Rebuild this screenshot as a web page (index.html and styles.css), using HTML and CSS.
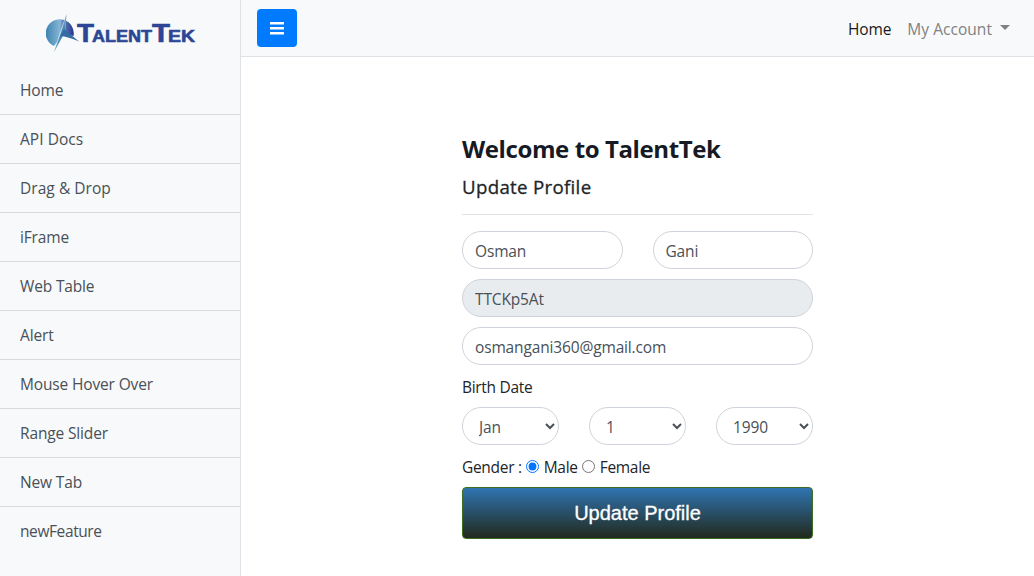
FILE: index.html
```html
<!DOCTYPE html>
<html lang="en">
<head>
<meta charset="utf-8">
<title>TalentTek</title>
<link rel="stylesheet" href="styles.css">
</head>
<body>
<div class="wrapper">
  <aside class="sidebar">
    <div class="brand">
      <svg class="logo" width="150" height="40" viewBox="0 0 150 40" role="img" aria-label="TalentTek">
        <defs>
          <linearGradient id="globe" x1="0" y1="0" x2="1" y2="0">
            <stop offset="0" stop-color="#3d83b1"/>
            <stop offset=".5" stop-color="#86b5d3"/>
            <stop offset=".62" stop-color="#6684b8"/>
            <stop offset="1" stop-color="#25348c"/>
          </linearGradient>
          <linearGradient id="blade" x1="0" y1="0" x2="0" y2="1">
            <stop offset="0" stop-color="#89b6cf"/>
            <stop offset=".5" stop-color="#3478ac"/>
            <stop offset="1" stop-color="#75adc8"/>
          </linearGradient>
        </defs>
        <path d="M27.5 22A14 14 0 1 0 8 32L17 20Z" fill="url(#globe)"/>
        <path d="M20.500 0L19 18L8 38L13 21Z" fill="#bfdcea"/>
        <path d="M20.500 0L19 18L8 38L15 19Z" fill="url(#blade)"/>
        <path d="M14 22L18.500 15.500L33 27.500Q22 22.500 14 22Z" fill="#356ca6"/>
        <g class="wordmark">
          <text x="31" y="28" font-size="26" textLength="17" lengthAdjust="spacingAndGlyphs">T</text>
          <text x="46" y="28" font-size="17" textLength="60" lengthAdjust="spacingAndGlyphs">ALENT</text>
          <text x="106" y="28" font-size="26" textLength="18" lengthAdjust="spacingAndGlyphs">T</text>
          <text x="122" y="28" font-size="17" textLength="27" lengthAdjust="spacingAndGlyphs">EK</text>
        </g>
      </svg>
    </div>
    <nav class="menu">
      <a>Home</a>
      <a class="wide">API Docs</a>
      <a class="wide">Drag &amp; Drop</a>
      <a>iFrame</a>
      <a>Web Table</a>
      <a>Alert</a>
      <a>Mouse Hover Over</a>
      <a>Range Slider</a>
      <a>New Tab</a>
      <a>newFeature</a>
    </nav>
  </aside>
  <div class="page">
    <header class="topbar">
      <button class="toggle" type="button" aria-label="Toggle menu">
        <svg width="16" height="16" viewBox="0 0 16 16"><path d="M1 3.25h14M1 8.25h14M1 13.25h14" stroke="#fff" stroke-width="2.5"/></svg>
      </button>
      <nav class="links">
        <a class="active">Home</a>
        <a class="account">My Account<span class="caret"></span></a>
      </nav>
    </header>
    <main class="content">
      <form class="profile">
        <h2 class="title">Welcome to TalentTek</h2>
        <h5 class="subtitle">Update Profile</h5>
        <hr class="rule">
        <div class="row">
          <input class="control" type="text" value="Osman">
          <input class="control" type="text" value="Gani">
        </div>
        <input class="control" type="text" value="TTCKp5At" disabled>
        <input class="control" type="text" value="osmangani360@gmail.com">
        <div class="label">Birth Date</div>
        <div class="row">
          <select class="control select"><option>Jan</option></select>
          <select class="control select"><option>1</option></select>
          <select class="control select"><option>1990</option></select>
        </div>
        <div class="gender">
          <span>Gender :</span>
          <input class="radio" type="radio" name="gender" checked>
          <span>Male</span>
          <input class="radio" type="radio" name="gender">
          <span>Female</span>
        </div>
        <button class="submit" type="button">Update Profile</button>
      </form>
    </main>
  </div>
</div>
</body>
</html>
```
FILE: styles.css
```css
* { box-sizing: border-box; }

body {
  margin: 0;
  overflow: hidden;
  background: #fff;
  color: #212529;
  font: 400 15.5px/24px "Open Sans", "Noto Sans", sans-serif;
  letter-spacing: -.15px;
}

.wrapper { display: flex; height: 576px; }

.sidebar {
  width: 241px;
  flex: none;
  background: #f8f9fa;
  border-right: 1px solid #dee2e6;
}

.brand { height: 66px; padding: 14px 0 0 46px; }
.logo { display: block; }

.wordmark {
  fill: #2c4695;
  stroke: #2c4695;
  stroke-width: .6;
  font-family: "Liberation Sans", Arial, sans-serif;
  font-weight: 700;
  letter-spacing: 0;
}

.menu a {
  display: block;
  height: 49px;
  padding: 12px 20px;
  border-bottom: 1px solid #d8dbde;
  color: #495057;
}
.menu .wide { letter-spacing: .05px; }
.menu a:last-child { border-bottom: 0; letter-spacing: -.4px; }

.page { flex: 1; }

.topbar {
  display: flex;
  align-items: center;
  justify-content: space-between;
  height: 57px;
  padding: 0 24px 0 16px;
  background: #f8f9fa;
  border-bottom: 1px solid #dee2e6;
}

.toggle {
  display: flex;
  align-items: center;
  justify-content: center;
  width: 40px;
  height: 38px;
  padding: 0;
  border: 0;
  border-radius: 4px;
  background: #007bff;
}

.links { display: flex; gap: 16px; padding-top: 1px; }
.links a { display: flex; align-items: center; color: #808182; }
.links .active { color: #191919; }
.account { letter-spacing: .05px; }

.caret {
  margin-left: 8px;
  margin-top: -3px;
  border: 5px solid transparent;
  border-top-color: #808182;
  border-bottom: 0;
}

.content { display: flex; justify-content: center; padding: 76px 0 0; }
.profile { width: 351px; }

.title {
  margin: 0;
  color: #151a24;
  font-size: 24px;
  font-weight: 700;
  line-height: 31px;
  letter-spacing: -.4px;
}
.subtitle {
  margin: 10px 0 15px;
  font-size: 18.7px;
  font-weight: 500;
  line-height: 25px;
  letter-spacing: .3px;
  -webkit-text-stroke: .3px #212529;
}
.rule { margin: 0 0 16px; border: 0; border-top: 1px solid #e3e3e3; }

.row { display: flex; gap: 30px; }

.control {
  display: block;
  width: 100%;
  min-width: 0;
  height: 38px;
  margin: 0 0 10px;
  padding: 8px 12px 6px;
  border: 1px solid #ced4da;
  border-radius: 20px;
  background-color: #fff;
  color: #495057;
  font: inherit;
  letter-spacing: -.15px;
}
.control:disabled { background-color: #e9ecef; }
.select { padding: 7px 11px 7px 12px; padding-right: 12px; }

.label { height: 32px; letter-spacing: -.3px; }

.gender {
  display: flex;
  align-items: center;
  height: 24px;
  margin-bottom: 8px;
  letter-spacing: -.3px;
}
.radio { width: 13px; height: 13px; margin: -2px 5px 0 4px; accent-color: #0075ff; }

.submit {
  display: block;
  width: 100%;
  height: 52px;
  padding: 0;
  border: 1px solid #3b6e22;
  border-radius: 4px;
  background: linear-gradient(#2f74b1, #22291c);
  color: #fff;
  font: 20px "Liberation Sans", Arial, sans-serif;
  -webkit-text-stroke: .3px #fff;
}
```
